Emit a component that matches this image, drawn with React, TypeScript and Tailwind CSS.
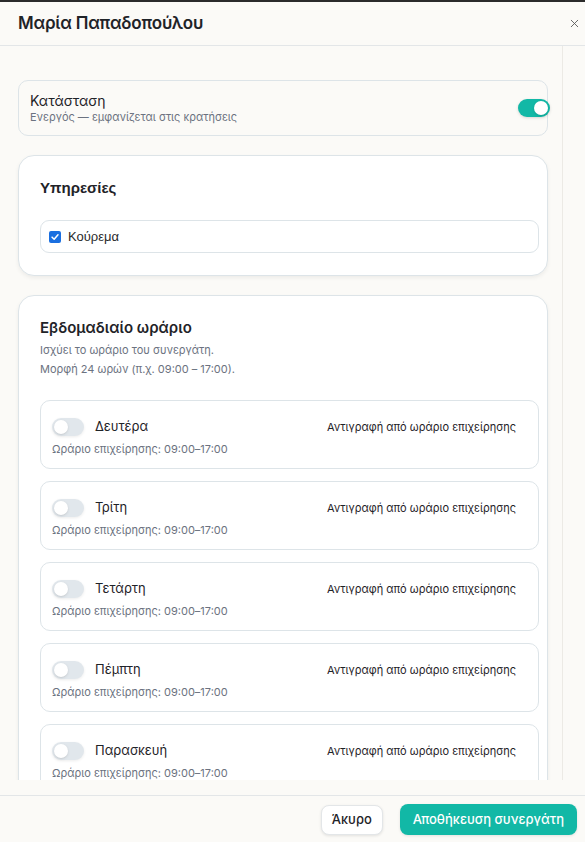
import { X } from "lucide-react";

const days = ["Δευτέρα", "Τρίτη", "Τετάρτη", "Πέμπτη", "Παρασκευή"];

const Toggle = ({ on }: { on?: boolean }) => (
  <div
    className={
      on
        ? "w-8 h-[18px] shrink-0 rounded-full bg-[#12b8a6] flex items-center justify-end px-[2px] shadow-[0_1px_3px_rgba(0,0,0,0.15)]"
        : "w-8 h-[18px] shrink-0 rounded-full bg-[#e1e7ec] flex items-center justify-start px-[2px] shadow-[0_1px_3px_rgba(0,0,0,0.08)]"
    }
  >
    <div className="w-[14px] h-[14px] rounded-full bg-white shadow-sm" />
  </div>
);

const DayRow = ({ name }: { name: string }) => (
  <div className="shrink-0 h-[69px] rounded-[10px] border border-[#dde4e8] bg-white pl-[11px] pr-[22px] pt-[14px]">
    <div className="flex items-center h-6">
      <Toggle />
      <span className="ml-[11px] text-[13px] text-[#1f2328]">{name}</span>
      <span className="ml-auto text-[11px] text-[#1f2328]">Αντιγραφή από ωράριο επιχείρησης</span>
    </div>
    <p className="mt-[2px] text-[11px] leading-4 text-[#6b7280]">Ωράριο επιχείρησης: 09:00–17:00</p>
  </div>
);

export default function App() {
  return (
    <div className="w-[585px] h-[842px] flex flex-col bg-[#fbfaf7] text-[#1f2328] font-['Inter',sans-serif] border-t-2 border-[#2b2b2b] overflow-hidden">
      <header className="h-[44px] shrink-0 flex items-center justify-between pl-[18px] pr-[4px] border-b border-[#e3e6e8]">
        <h1 className="text-[17px] font-semibold tracking-[-0.2px]">Μαρία Παπαδοπούλου</h1>
        <X className="w-[13px] h-[13px] text-[#555]" strokeWidth={1.6} />
      </header>

      <div className="h-[734px] shrink-0 overflow-hidden flex">
        <div className="w-[563px] shrink-0 border-r border-[#eceae5] pl-[18px] pr-[14px] pt-[34px] flex flex-col gap-[19px]">
          <div className="h-[56px] shrink-0 rounded-[10px] border border-[#dde4e8] flex items-center justify-between pl-[11px]">
            <div>
              <p className="text-[14px] leading-[18px]">Κατάσταση</p>
              <p className="text-[11px] leading-[15px] text-[#6b7280]">Ενεργός — εμφανίζεται στις κρατήσεις</p>
            </div>
            <div className="mr-[-3px]">
              <Toggle on />
            </div>
          </div>

          <section className="shrink-0 rounded-[16px] border border-[#dde4e8] bg-white shadow-[0_2px_4px_rgba(0,0,0,0.06)] pl-[21px] pr-[8px] pt-[22px] pb-[22px]">
            <h2 className="text-[15px] font-semibold leading-5 font-['Liberation_Sans',sans-serif]">Υπηρεσίες</h2>
            <label className="mt-[22px] h-[33px] rounded-[9px] border border-[#dde4e8] flex items-center gap-[7px] px-[8px]">
              <span className="w-[12px] h-[12px] rounded-[2px] bg-[#1a6fe0] flex items-center justify-center">
                <svg viewBox="0 0 12 12" className="w-[10px] h-[10px]">
                  <path d="M2.5 6.2 L5 8.6 L9.6 3.4" fill="none" stroke="white" strokeWidth="1.8" strokeLinecap="round" strokeLinejoin="round" />
                </svg>
              </span>
              <span className="text-[13px] font-['Liberation_Sans',sans-serif] text-[#2a2a2a]">Κούρεμα</span>
            </label>
          </section>

          <section className="shrink-0 rounded-[16px] border border-[#dde4e8] bg-white shadow-[0_2px_4px_rgba(0,0,0,0.06)] pl-[21px] pr-[8px] pt-[22px] pb-[22px]">
            <h2 className="text-[15px] font-semibold leading-5">Εβδομαδιαίο ωράριο</h2>
            <p className="mt-[3px] text-[11px] leading-[19px] text-[#6b7280]">Ισχύει το ωράριο του συνεργάτη.</p>
            <p className="text-[11px] leading-[19px] text-[#6b7280]">Μορφή 24 ωρών (π.χ. 09:00 – 17:00).</p>
            <div className="mt-[21px] flex flex-col gap-[12px]">
              {days.map((d) => (
                <DayRow key={d} name={d} />
              ))}
            </div>
          </section>
        </div>
      </div>

      <footer className="mt-[15px] flex-1 border-t border-[#e3e6e8] flex items-center justify-end gap-[17px] pr-[8px] pt-[1px]">
        <button className="h-[30px] px-[10px] rounded-[8px] border border-[#e3e6e8] bg-white shadow-[0_1px_3px_rgba(0,0,0,0.1)] text-[13px] font-medium">
          Άκυρο
        </button>
        <button className="h-[31px] px-[13px] rounded-[8px] bg-[#12b8a6] text-white text-[13px] font-medium shadow-[0_1px_3px_rgba(0,0,0,0.1)]">
          Αποθήκευση συνεργάτη
        </button>
      </footer>
    </div>
  );
}
